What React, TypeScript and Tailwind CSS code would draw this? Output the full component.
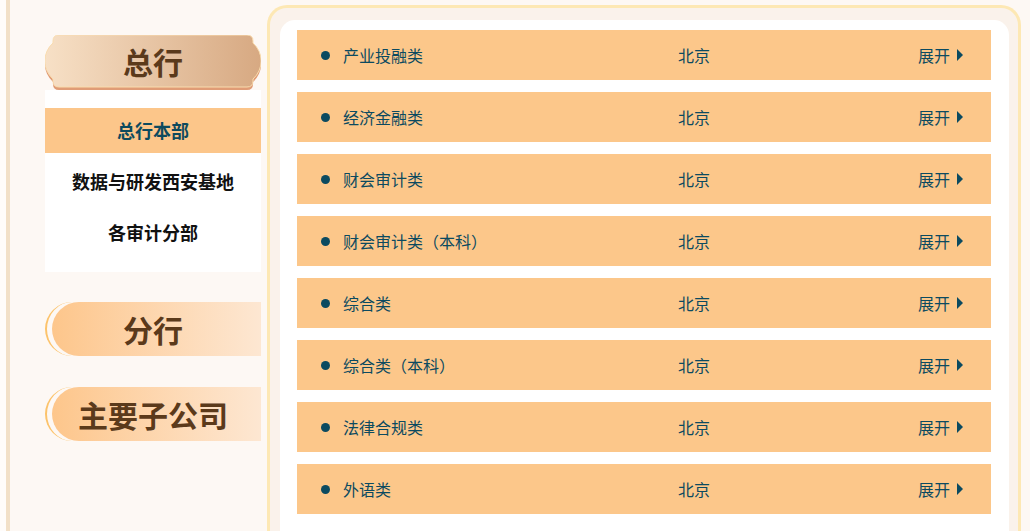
import React from "react";

const rows = [
  "产业投融类",
  "经济金融类",
  "财会审计类",
  "财会审计类（本科）",
  "综合类",
  "综合类（本科）",
  "法律合规类",
  "外语类",
];

const subItems = ["总行本部", "数据与研发西安基地", "各审计分部"];

// 总行 plaque background
function Plaque() {
  const d =
    "M14,0 H202 Q208,0 208,6 V8 A24,24 0 0 1 208,44 V46 Q208,52 202,52 H14 Q8,52 8,46 V44 A24,24 0 0 1 8,8 V6 Q8,0 14,0 Z";
  return (
    <svg className="absolute inset-0" width="216" height="56" viewBox="0 0 216 56">
      <defs>
        <linearGradient id="plq" x1="0" y1="0" x2="1" y2="0">
          <stop offset="0" stopColor="#f7e0c6" />
          <stop offset="1" stopColor="#d7a982" />
        </linearGradient>
      </defs>
      <path d={d} transform="translate(0,3)" fill="#e09c76" />
      <path d={d} fill="url(#plq)" stroke="#f9dcae" strokeWidth="1" />
    </svg>
  );
}

function PillTitle({ title }: { title: string }) {
  return (
    <div className="relative h-[54px] w-[216px]">
      <div className="absolute left-0 top-0 h-full w-[40px] rounded-l-[28px] border-l-[2px] border-[#fcc36b]" />
      <div className="ml-[7px] flex h-full items-center justify-center rounded-l-[27px] bg-gradient-to-r from-[#fdc68b] to-[#fde7d2] pr-[7px]">
        <span className="text-[30px] font-bold text-[#5b3a1b]">{title}</span>
      </div>
    </div>
  );
}

export default function App() {
  return (
    <div className="flex min-h-screen bg-[#fdf8f4] font-['Noto_Sans_CJK_SC',sans-serif]">
      {/* left edge */}
      <div className="w-[6px] shrink-0 bg-[#fffcfa]" />
      <div className="w-[4px] shrink-0 bg-[#f2e0c8]" />

      {/* SIDEBAR */}
      <div className="w-[257px] shrink-0 pl-[35px] pt-[35px]">
        <div className="relative flex h-[55px] w-[216px] items-center justify-center pb-[3px]">
          <Plaque />
          <span className="relative text-[30px] font-bold text-[#5b3a1b]">总行</span>
        </div>
        <div className="flex w-[216px] flex-col gap-[6px] bg-white pb-[17px] pt-[18px]">
          {subItems.map((s, i) => (
            <div
              key={s}
              className={
                i === 0
                  ? "flex h-[45px] items-center justify-center bg-[#fcc68a] text-[18px] font-bold text-[#0d4a5e]"
                  : "flex h-[45px] items-center justify-center text-[18px] font-bold text-[#111111]"
              }
            >
              {s}
            </div>
          ))}
        </div>
        <div className="mt-[30px]">
          <PillTitle title="分行" />
        </div>
        <div className="mt-[31px]">
          <PillTitle title="主要子公司" />
        </div>
      </div>

      {/* RIGHT PANEL */}
      <div className="mt-[5px] w-[754px] shrink-0 rounded-t-[20px] border-[3px] border-b-0 border-[#fde8b4] bg-[#faf2eb] pl-[10px] pr-[9px] pt-[12px]">
        <div className="flex flex-col gap-[12px] rounded-t-[15px] bg-white pb-[20px] pl-[17px] pr-[18px] pt-[10px]">
          {rows.map((r) => (
            <div
              key={r}
              className="flex h-[50px] items-center bg-[#fcc78a] pl-[24px] pr-[28px] text-[16px] text-[#0b4a60]"
            >
              <div className="flex w-[357px] items-center">
                <span className="h-[9px] w-[9px] rounded-full bg-[#0b4a60]" />
                <span className="ml-[13px]">{r}</span>
              </div>
              <div className="flex-1">北京</div>
              <div className="flex items-center">
                <span>展开</span>
                <svg className="ml-[7px]" width="6" height="12" viewBox="0 0 6 12">
                  <polygon points="0,0 6,6 0,12" fill="#0b4a60" />
                </svg>
              </div>
            </div>
          ))}
        </div>
      </div>
    </div>
  );
}
